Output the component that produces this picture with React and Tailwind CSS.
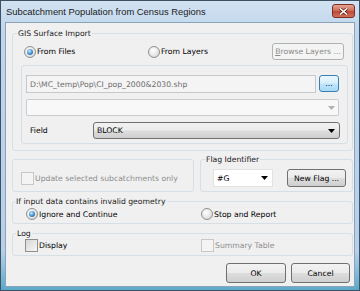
import React from "react";

// Vista-style "Subcatchment Population from Census Regions" dialog
const font = "font-['DejaVu_Sans',Verdana,sans-serif]";

function Radio({ checked }) {
  return (
    <span className="flex h-[12px] w-[12px] shrink-0 items-center justify-center rounded-full border border-[#8e8f8f] bg-[radial-gradient(circle_at_40%_35%,#ffffff,#e4e4e4_60%,#cdcdcd)]">
      {checked && (
        <span className="h-[6px] w-[6px] rounded-full bg-[radial-gradient(circle_at_40%_35%,#c9ecff,#3d8ccb_55%,#1d5a98)]" />
      )}
    </span>
  );
}

function Checkbox({ disabled }) {
  return disabled ? (
    <span className="block h-[13px] w-[13px] shrink-0 border border-[#c8c8c8] bg-[#f4f4f4]" />
  ) : (
    <span className="block h-[13px] w-[13px] shrink-0 border border-[#8e8f8f] bg-[linear-gradient(135deg,#d6d6d6,#f7f7f7)]" />
  );
}

function Arrow({ color = "#000" }) {
  return (
    <svg width="7" height="4" viewBox="0 0 7 4" className="shrink-0">
      <path d="M0 0h7L3.5 4z" fill={color} />
    </svg>
  );
}

function Button({ className = "", children }) {
  return (
    <div
      className={`flex items-center justify-center rounded-[3px] border border-[#707070] bg-[linear-gradient(#f2f2f2,#ebebeb_48%,#dddddd_52%,#cfcfcf)] text-black ${className}`}
    >
      {children}
    </div>
  );
}

function Group({ label, labelClass = "", className = "", children }) {
  return (
    <div className={`relative rounded-[3px] border border-[#d5dfe5] ${className}`}>
      {label && (
        <span className={`absolute top-[-6px] bg-[#f0f0f0] px-[1px] leading-[11px] text-[#1a1a1a] ${labelClass}`}>
          {label}
        </span>
      )}
      {children}
    </div>
  );
}

export default function App() {
  return (
    <div className={`h-[291px] w-[360px] overflow-hidden ${font} text-[7.7px] leading-[11px] text-black`}>
      <div className="flex h-[291px] w-[360px] flex-col border border-[#3c5163] bg-[linear-gradient(#d2e2f2,#c0d6ec_30px,#b7d0e8_250px,#5aa9c9)]">
        {/* title bar */}
        <div className="flex h-[21px] shrink-0 items-start justify-between pl-[5px] pr-[4px]">
          <span className="mt-[5px] font-['Liberation_Sans',Arial,sans-serif] text-[9.4px] leading-[12px] text-[#1b1b1b]">
            Subcatchment Population from Census Regions
          </span>
          <div className="mt-[3px] flex h-[14px] w-[23px] items-center justify-center rounded-[3px] border border-[#7a2f24] bg-[linear-gradient(#e6a493,#cf6f5c_45%,#c04a36_55%,#d0705a)]">
            <svg width="9" height="7" viewBox="0 0 9 7">
              <path d="M1 0.5l7 6M8 0.5l-7 6" stroke="#5a1d14" strokeWidth="3" />
              <path d="M1 0.5l7 6M8 0.5l-7 6" stroke="#ffffff" strokeWidth="1.6" />
            </svg>
          </div>
        </div>

        {/* client area */}
        <div className="mx-[4px] mb-[3px] flex flex-1 flex-col border border-[#8aa3bb] bg-[#f0f0f0]">
          <Group label="GIS Surface Import" labelClass="left-[4px]" className="ml-[6px] mt-[10px] h-[118px] w-[341px]">
            <div className="mt-[9px] flex h-[17px] items-center">
              <div className="ml-[11px] flex w-[124px] items-center gap-[1px]">
                <Radio checked />
                <span>From Files</span>
              </div>
              <div className="flex w-[124px] items-center gap-[1px]">
                <Radio />
                <span>From Layers</span>
              </div>
              <div className="flex h-[17px] w-[72px] items-center justify-center rounded-[3px] border border-[#adb2b5] bg-[#f4f4f4] text-[#8a8a8a]">
                <span>
                  <span className="underline">B</span>rowse Layers ...
                </span>
              </div>
            </div>

            <div className="ml-[8px] mt-[5px] flex h-[79px] w-[327px] flex-col rounded-[3px] border border-[#d5dfe5]">
              <div className="mt-[9px] flex items-start">
                <div className="ml-[4px] flex h-[18px] w-[290px] items-center border border-[#c4c9cd] bg-[#f4f4f4] pl-[3px] text-[#6d6d6d]">
                  D:\MC_temp\Pop\CI_pop_2000&amp;2030.shp
                </div>
                <div className="ml-[3px] flex h-[17px] w-[20px] items-center justify-center rounded-[3px] border border-[#3c7fb1] bg-[linear-gradient(#eaf6fd,#d9f0fc_48%,#bee6fd_52%,#a7d9f5)] leading-[8px]">
                  ...
                </div>
              </div>
              <div className="ml-[4px] mt-[6px] flex h-[17px] w-[313px] items-center justify-end rounded-[2px] border border-[#c8cdd1] bg-[#f8f8f8] pr-[3px]">
                <Arrow color="#b0b0b0" />
              </div>
              <div className="mt-[6px] flex h-[17px] items-center">
                <span className="ml-[8px] w-[63px]">Field</span>
                <Button className="h-[17px] w-[247px] !justify-between pl-[3px] pr-[4px]">
                  <span>BLOCK</span>
                  <Arrow />
                </Button>
              </div>
            </div>
          </Group>

          <div className="mt-[8px] flex h-[33px] shrink-0">
            <Group className="ml-[6px] h-[33px] w-[182px]">
              <div className="ml-[8px] mt-[12px] flex items-center gap-[1px] text-[#8d8d8d]">
                <Checkbox disabled />
                <span>Update selected subcatchments only</span>
              </div>
            </Group>
            <Group label="Flag Identifier" labelClass="left-[4px]" className="ml-[6px] h-[33px] w-[153px]">
              <div className="ml-[12px] mt-[9px] flex items-center">
                <div className="flex h-[18px] w-[60px] items-center justify-between border border-[#e2e2e2] bg-white pl-[3px] pr-[4px]">
                  <span>#G</span>
                  <Arrow />
                </div>
                <Button className="ml-[14px] h-[18px] w-[59px]">New Flag ...</Button>
              </div>
            </Group>
          </div>

          <Group
            label="If input data contains invalid geometry"
            labelClass="left-[2px]"
            className="ml-[6px] mt-[9px] h-[23px] w-[341px] shrink-0"
          >
            <div className="ml-[13px] mt-[6px] flex h-[12px] items-center">
              <div className="flex w-[175px] items-center gap-[1px]">
                <Radio checked />
                <span>Ignore and Continue</span>
              </div>
              <div className="flex items-center gap-[1px]">
                <Radio />
                <span>Stop and Report</span>
              </div>
            </div>
          </Group>

          <Group label="Log" labelClass="left-[3px]" className="ml-[6px] mt-[9px] h-[23px] w-[341px] shrink-0">
            <div className="ml-[12px] mt-[5px] flex h-[13px] items-center">
              <div className="flex w-[176px] items-center">
                <Checkbox />
                <span className="ml-[1px]">Display</span>
              </div>
              <div className="flex items-center text-[#8d8d8d]">
                <Checkbox disabled />
                <span className="ml-[1px]">Summary Table</span>
              </div>
            </div>
          </Group>

          <div className="mt-[7px] flex justify-end gap-[5px] pr-[4px]">
            <Button className="h-[20px] w-[60px]">OK</Button>
            <Button className="h-[20px] w-[59px]">Cancel</Button>
          </div>
        </div>
      </div>
    </div>
  );
}
